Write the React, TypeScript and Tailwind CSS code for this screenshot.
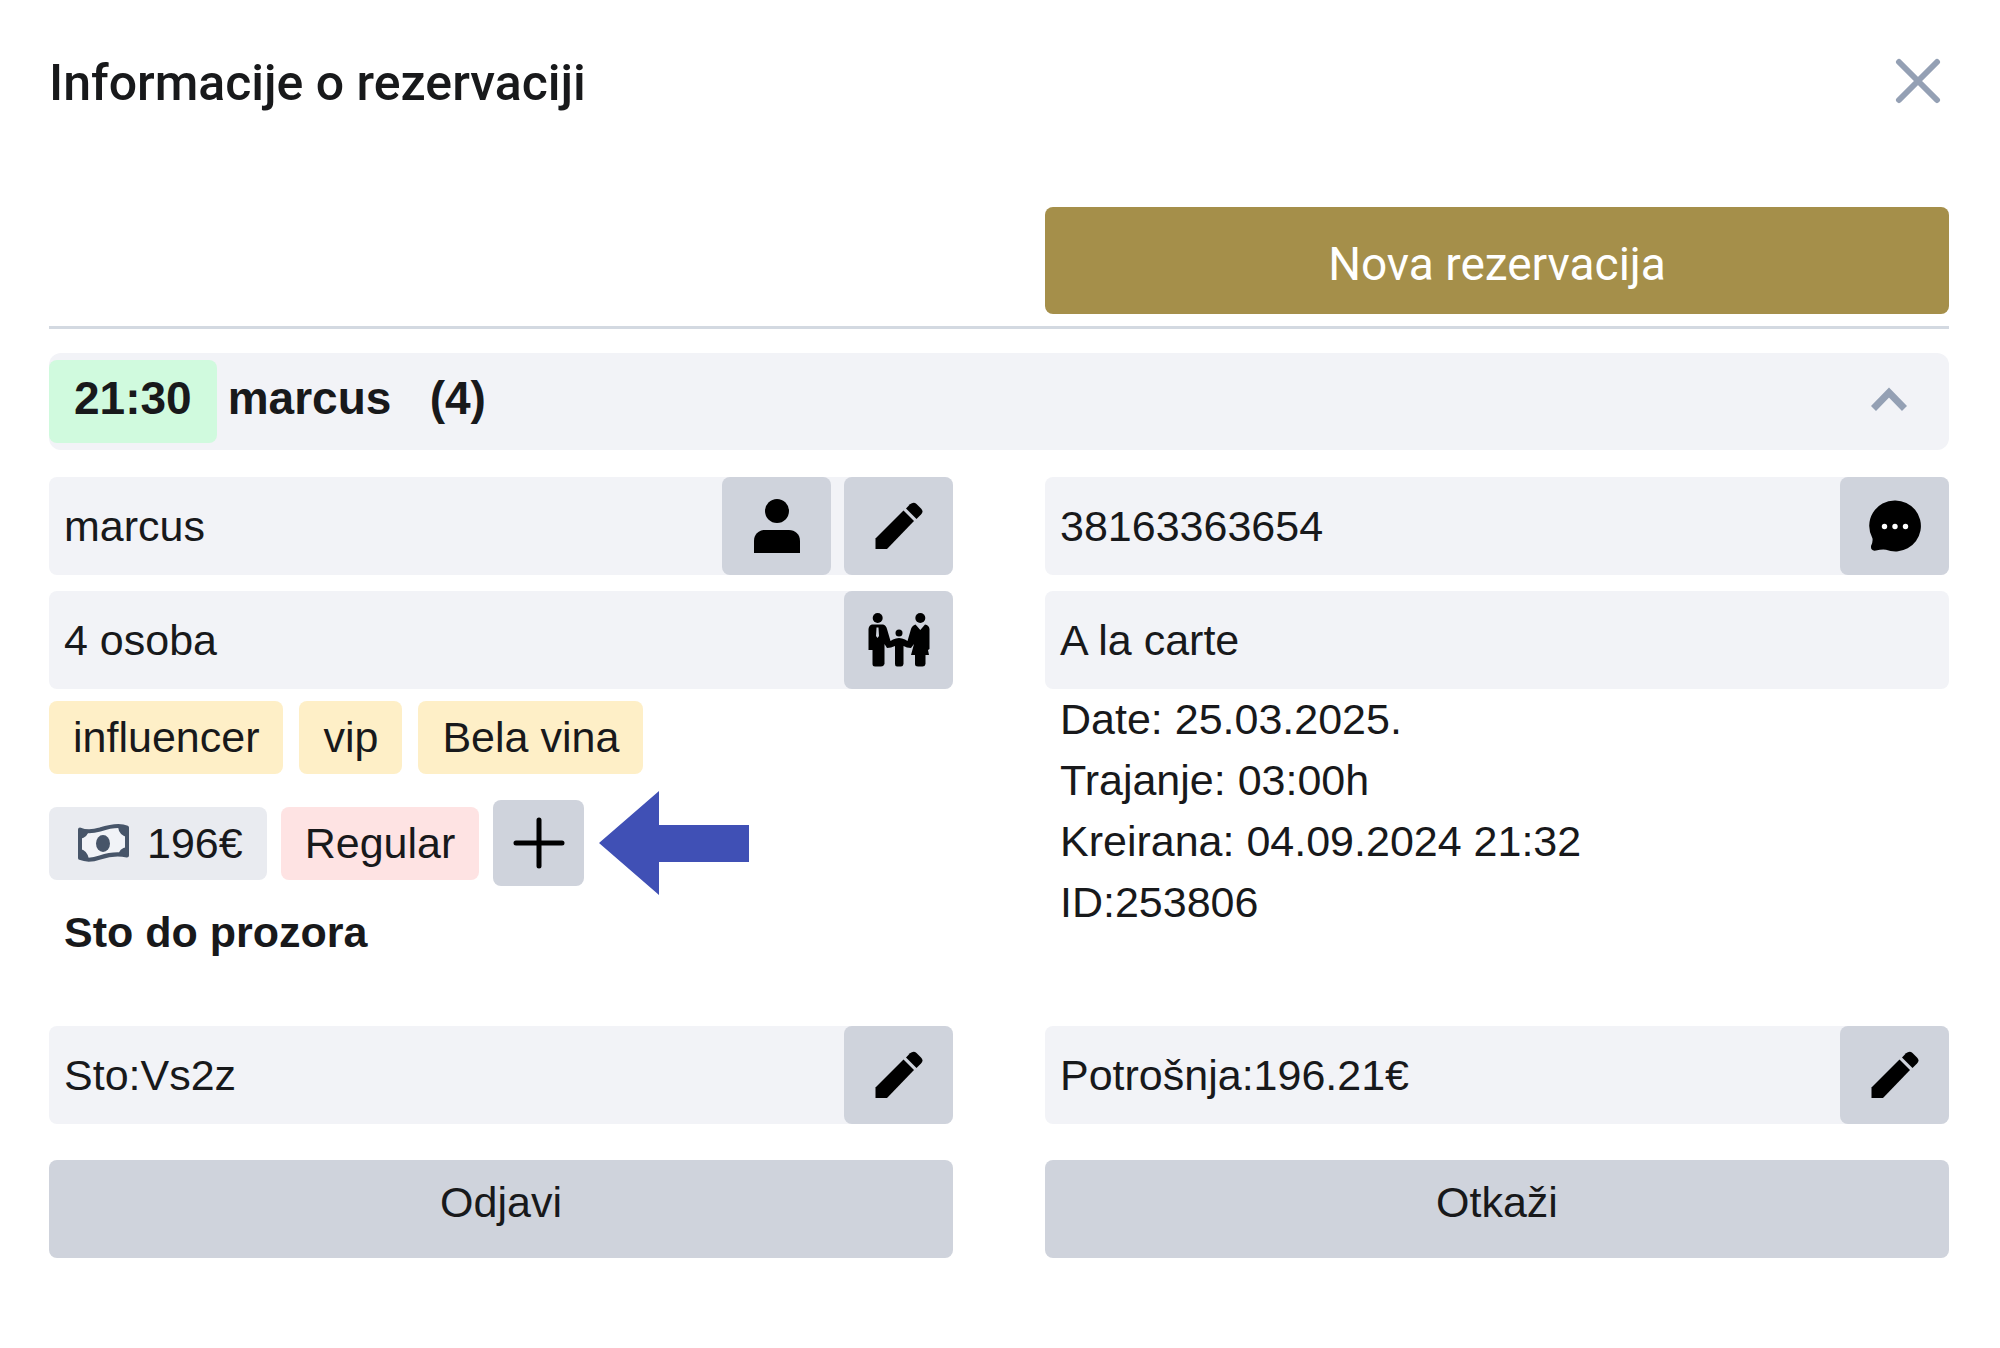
import React from "react";

const META = ["Date: 25.03.2025.", "Trajanje: 03:00h", "Kreirana: 04.09.2024 21:32", "ID:253806"];

const GUEST_TAGS = ["influencer", "vip", "Bela vina"];

function CloseIcon() {
  return (
    <svg viewBox="0 0 46 46" className="size-[46px]" fill="none" stroke="currentColor" strokeWidth="6" strokeLinecap="round">
      <path d="M4 4l38 38M42 4L4 42" />
    </svg>
  );
}

function ChevronUpIcon() {
  return (
    <svg viewBox="0 0 36 36" className="size-9" fill="none" stroke="currentColor" strokeWidth="7">
      <path d="M2.500 24.500L18 8.500L33.500 24.500" />
    </svg>
  );
}

function PencilIcon() {
  return (
    <svg viewBox="0 0 48 48" className="size-12" fill="currentColor">
      <path d="M.5 36.500L28.500 8.500L39 19L12 47H.5Z" />
      <path d="M31 6.500L35 2.300Q38.500 -.8 41.500 2L46 6.500Q49 9.500 46 12.500L41.500 17Z" />
    </svg>
  );
}

function PersonIcon() {
  return (
    <svg viewBox="0 0 48 56" className="h-14 w-12" fill="currentColor">
      <circle cx="24" cy="13" r="12" />
      <path d="M1 55V43C1 36 6 32 12 32H36C42 32 47 36 47 43V55Z" />
    </svg>
  );
}

function FamilyIcon() {
  return (
    <svg viewBox="0 0 62 54" className="h-[54px] w-[62px]" fill="currentColor">
      <circle cx="9.7" cy="5" r="5" />
      <circle cx="31" cy="20" r="3.5" />
      <circle cx="52.3" cy="5" r="5" />
      <path d="M4 11.5H15Q18 12 19 16L22.5 28L25 26.5Q28 25 31 25Q34 25 37 26.5L39.500 28L43 16Q44 12.500 47.500 11.500L52.300 17L57 11.500Q61 12 61.500 16V36L60 37L61 42H57.500V51Q57 53.500 54.500 53.500H50Q47 53.500 47 51V42H43L46 31L43 35L39 34.500L35.500 33V51Q35 53.500 33 53.500H29Q27 53.500 27 51V33L23 34.500L19 35L16.500 31V51Q15.500 53.500 13 53.500H7Q4.500 53.500 4.500 51V37H.5V16Q1 12 4 11.500Z" />
      <path d="M8.500 14.500H10.500L11 23L9.500 25L8 23Z" className="fill-[#cfd3dc]" />
    </svg>
  );
}

function ChatIcon() {
  return (
    <svg viewBox="0 0 54 54" className="size-[54px]" fill="currentColor">
      <path d="M27.500 1.500A25.500 25.500 0 1 1 18 50.700Q14 50 8 51.500Q2.500 52.500 3 47Q5 43 4.500 39.500A25.500 25.500 0 0 1 27.500 1.500Z" />
      <g className="fill-white">
        <circle cx="16.500" cy="27.500" r="2.700" />
        <circle cx="27" cy="27.500" r="2.700" />
        <circle cx="37.500" cy="27.500" r="2.700" />
      </g>
    </svg>
  );
}

function MoneyIcon() {
  return (
    <svg viewBox="0 0 64 40" className="h-10 w-16 text-[#475569]">
      <path
        d="M7 6.500C13 9 20 8.500 27 6.500C36 3.500 46 1 54 4.500V32.500C46 30.500 36 31.500 27 34.500C20 37 13 37.500 7 35Z"
        className="fill-[#f1f3f7]"
        stroke="currentColor"
        strokeWidth="4"
        strokeLinejoin="round"
      />
      <path d="M7 7H16Q15 14 7 16ZM54 5V14Q46 12 45 4ZM54 33H45Q46 25 54 24ZM7 35V26Q14 27 16 36Z" fill="currentColor" />
      <ellipse cx="30" cy="20.500" rx="7" ry="8.500" fill="currentColor" />
    </svg>
  );
}

function PlusIcon() {
  return (
    <svg viewBox="0 0 52 52" className="size-[52px]" fill="none" stroke="currentColor" strokeWidth="5" strokeLinecap="round">
      <path d="M26 3v46M3 26h46" />
    </svg>
  );
}

function IconButton({ label, children }: { label: string; children: React.ReactNode }) {
  return (
    <button
      type="button"
      aria-label={label}
      className="flex h-full w-[109px] items-center justify-center rounded-lg bg-[#cfd3dc] text-black"
    >
      {children}
    </button>
  );
}

function Field({ text, children }: { text: string; children?: React.ReactNode }) {
  return (
    <div className="flex h-[98px] items-center rounded-lg bg-[#f2f3f7]">
      <p className="flex-1 px-[15px]">{text}</p>
      <div className="flex h-full gap-[13px]">{children}</div>
    </div>
  );
}

export default function App() {
  return (
    <main className="min-h-screen bg-white pt-[41px] pr-[51px] pb-10 pl-[49px] font-['Liberation_Sans',Arial,sans-serif] text-[43px] leading-[61px] text-[#18191b]">
      <header className="flex h-20 items-center justify-between">
        <h1 className="pt-1 font-[Roboto,sans-serif] text-[50px] font-medium">Informacije o rezervaciji</h1>
        <button type="button" aria-label="Zatvori" className="mr-2 text-[#94a0b4]">
          <CloseIcon />
        </button>
      </header>

      <div className="mt-[86px] grid grid-cols-2 gap-x-[92px] border-b-[3px] border-[#d3d9e1] pb-3">
        <button
          type="button"
          className="col-start-2 h-[107px] rounded-lg bg-[#a58f4a] pt-2 font-[Roboto,sans-serif] text-[46px] text-white"
        >
          Nova rezervacija
        </button>
      </div>

      <section className="mt-6 flex h-[97px] items-center justify-between rounded-xl bg-[#f2f3f7] pr-[42px]">
        <div className="flex items-center text-[46px] font-bold">
          <time className="flex h-[83px] items-center rounded-lg bg-[#d0fade] px-[25px] pb-1.5">21:30</time>
          <h2 className="ml-[11px] pb-1.5 whitespace-pre">marcus   (4)</h2>
        </div>
        <button type="button" aria-label="Sakrij detalje" className="text-[#94a0b4]">
          <ChevronUpIcon />
        </button>
      </section>

      <div className="mt-[27px] grid grid-cols-2 gap-x-[92px]">
        <div>
          <div className="flex flex-col gap-4">
            <Field text="marcus">
              <IconButton label="Profil gosta">
                <PersonIcon />
              </IconButton>
              <IconButton label="Izmeni ime">
                <PencilIcon />
              </IconButton>
            </Field>
            <Field text="4 osoba">
              <IconButton label="Broj osoba">
                <FamilyIcon />
              </IconButton>
            </Field>
          </div>

          <ul className="mt-3 flex gap-4">
            {GUEST_TAGS.map((tag) => (
              <li key={tag} className="rounded-lg bg-[#feefc7] px-6 py-1.5">
                {tag}
              </li>
            ))}
          </ul>

          <div className="mt-[26px] flex items-center gap-3.5">
            <span className="flex items-center gap-2.5 rounded-lg bg-[#e9ebf0] px-6 py-1.5">
              <MoneyIcon />
              196€
            </span>
            <span className="rounded-lg bg-[#fee3e3] px-6 py-1.5">Regular</span>
            <button
              type="button"
              aria-label="Dodaj oznaku"
              className="flex h-[86px] w-[91px] items-center justify-center rounded-lg bg-[#cfd3dc] text-black"
            >
              <PlusIcon />
            </button>
            <div className="-my-3 h-[106px]">
              <svg viewBox="0 0 152 106" className="h-[106px] w-[152px] fill-[#4050b5]">
                <path d="M1 53L61 1V35H151V72H61V105Z" />
              </svg>
            </div>
          </div>

          <p className="mt-4 px-[15px] font-bold">Sto do prozora</p>
        </div>

        <div>
          <div className="flex flex-col gap-4">
            <Field text="38163363654">
              <IconButton label="Pošalji poruku">
                <ChatIcon />
              </IconButton>
            </Field>
            <Field text="A la carte" />
          </div>
          <div className="px-[15px]">
            {META.map((line) => (
              <p key={line}>{line}</p>
            ))}
          </div>
        </div>
      </div>

      <div className="mt-[63px] grid grid-cols-2 gap-x-[92px] gap-y-9">
        <Field text="Sto:Vs2z">
          <IconButton label="Izmeni sto">
            <PencilIcon />
          </IconButton>
        </Field>
        <Field text="Potrošnja:196.21€">
          <IconButton label="Izmeni potrošnju">
            <PencilIcon />
          </IconButton>
        </Field>
        <button type="button" className="h-[98px] rounded-lg bg-[#cfd3dc] pb-3.5">
          Odjavi
        </button>
        <button type="button" className="h-[98px] rounded-lg bg-[#cfd3dc] pb-3.5">
          Otkaži
        </button>
      </div>
    </main>
  );
}
